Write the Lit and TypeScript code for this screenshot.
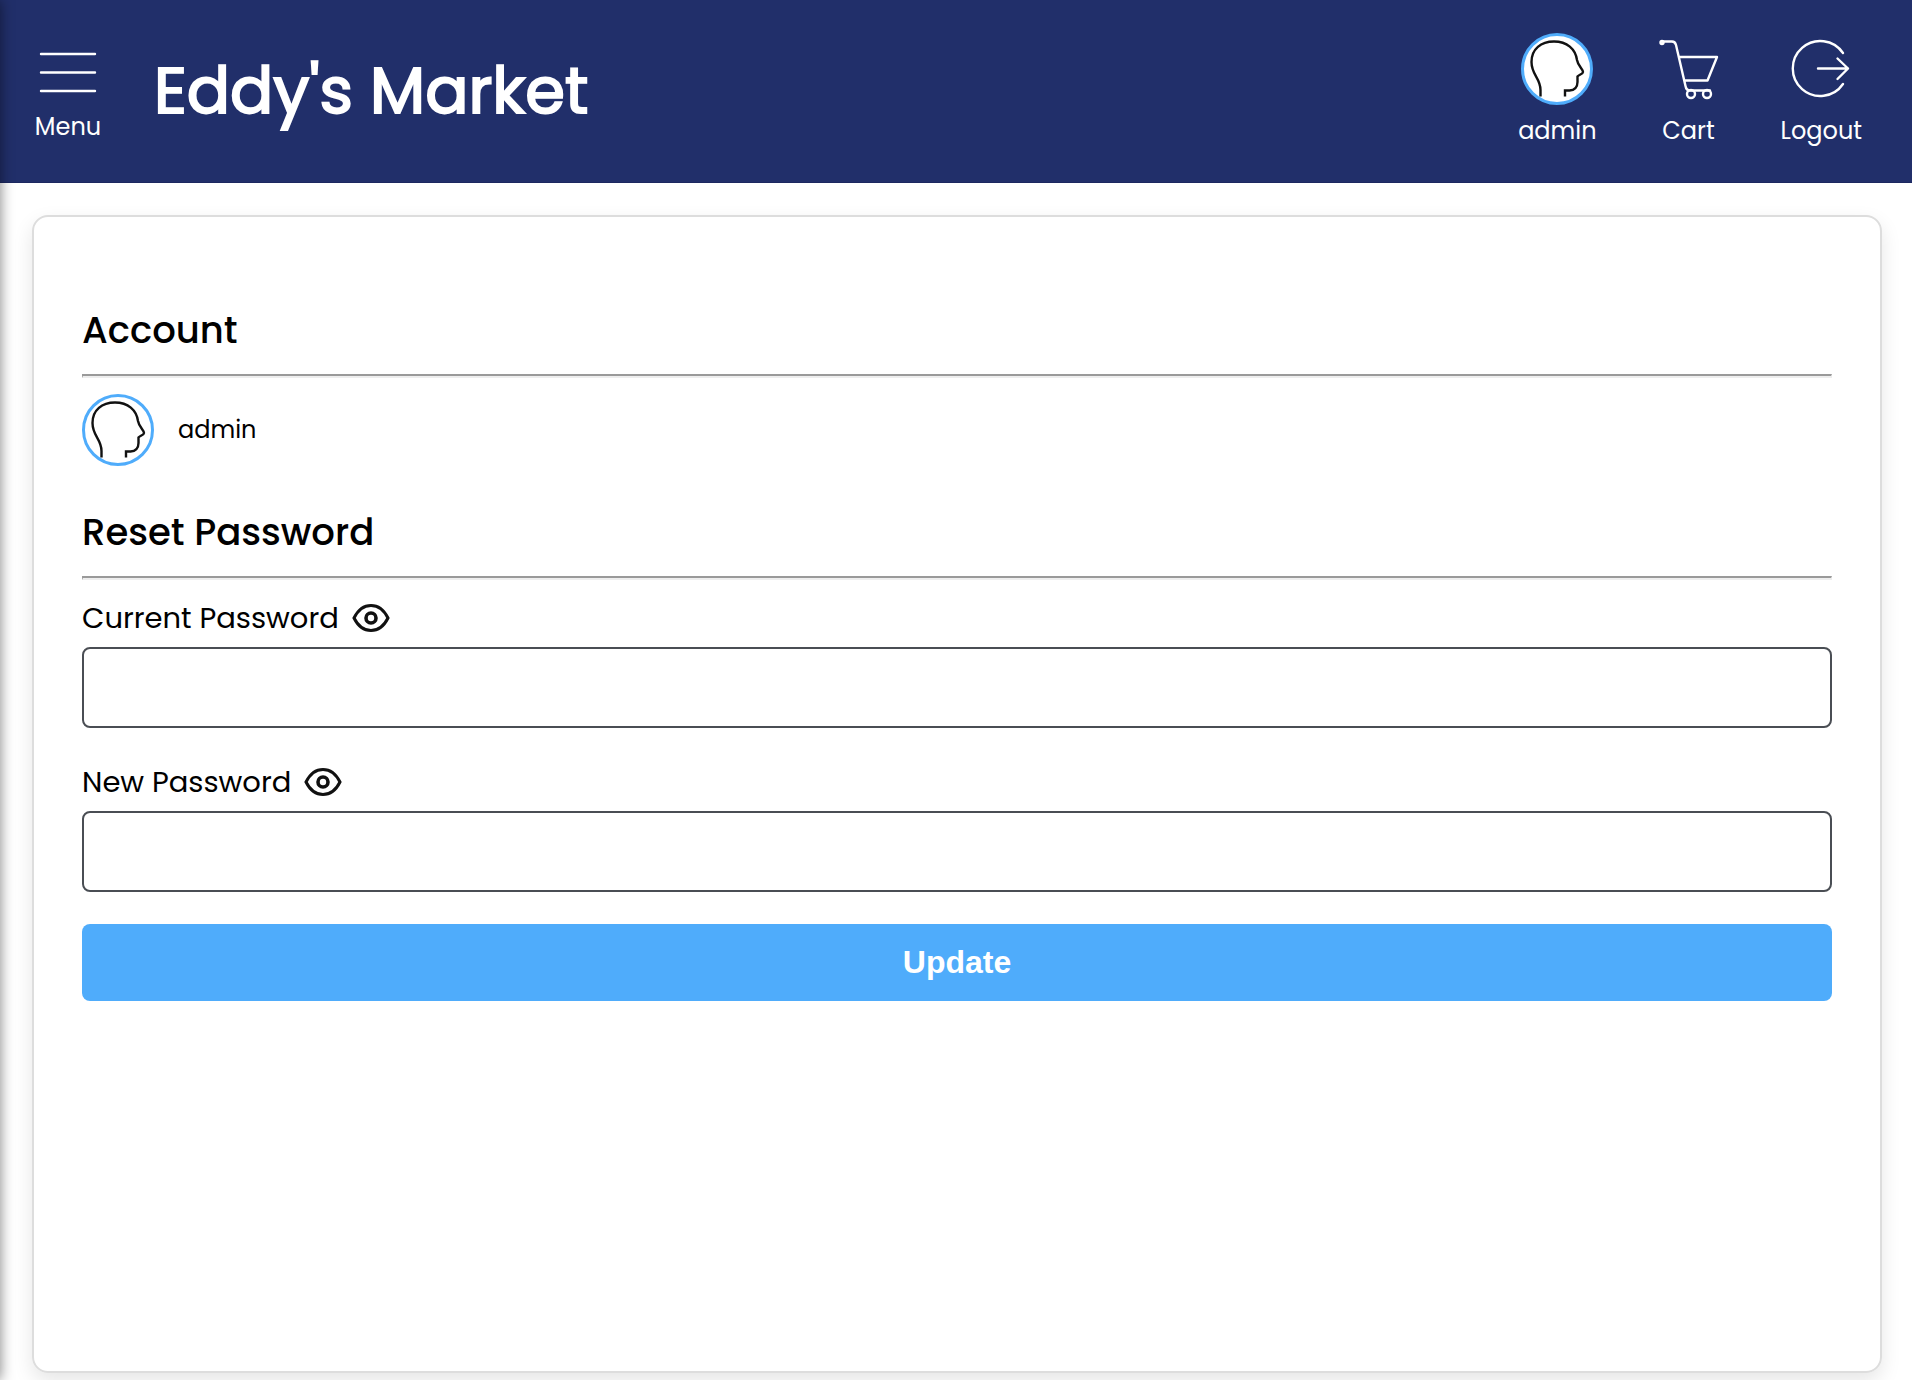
import { LitElement, html, css, svg } from "lit";
import { customElement, property, state } from "lit/decorators.js";

const head = svg`<path d="M19.500 63.500V57C19.500 45 10.500 42 10.500 29C10.500 16 20 8.500 33 8.500C46 8.500 54.500 16 56 27C57 33 62 36 62 39C62 41 57.500 42 56.500 43.500V49C56.500 54 53.500 57.500 48.500 57.500H44V63.500" />`;

@customElement("user-avatar")
class UserAvatar extends LitElement {
  static styles = css`
    :host {
      display: block;
      box-sizing: border-box;
      width: 72px;
      height: 72px;
      border: 3px solid #4facfb;
      border-radius: 50%;
      background: #fff;
    }
    .head {
      display: block;
      width: 100%;
      height: 100%;
      fill: none;
      stroke: #111;
      stroke-width: 2.400;
    }
  `;

  render() {
    return html`<svg class="head" viewBox="3 3 66 66" aria-hidden="true">${head}</svg>`;
  }
}

@customElement("password-field")
class PasswordField extends LitElement {
  @property() label = "";
  @state() private shown = false;

  static styles = css`
    :host {
      display: block;
    }
    .caption {
      display: flex;
      align-items: center;
      gap: 13px;
      height: 44px;
      margin-bottom: 7px;
      font-size: 29px;
    }
    .toggle {
      display: flex;
      padding: 0;
      border: 0;
      background: none;
      cursor: pointer;
    }
    .eye {
      width: 38px;
      height: 30px;
      fill: none;
      stroke: #111;
      stroke-width: 3;
    }
    .box {
      display: block;
      box-sizing: border-box;
      width: 100%;
      height: 81px;
      padding: 0 16px;
      border: 2px solid #4a4e54;
      border-radius: 8px;
      background: #fff;
      font: inherit;
      font-size: 29px;
    }
  `;

  render() {
    return html`
      <div class="caption">
        <label for="box">${this.label}</label>
        <button
          class="toggle"
          type="button"
          aria-label="Show password"
          aria-pressed=${this.shown}
          @click=${() => (this.shown = !this.shown)}
        >
          <svg class="eye" viewBox="0 0 38 30" aria-hidden="true">
            <path d="M2 15C6 7 12 2.500 19 2.500S32 7 36 15C32 23 26 27.500 19 27.500S6 23 2 15Z" />
            <circle cx="19" cy="15" r="5" stroke-width="3.600" />
          </svg>
        </button>
      </div>
      <input id="box" class="box" type=${this.shown ? "text" : "password"} />
    `;
  }
}

@customElement("app-root")
class AppRoot extends LitElement {
  static styles = css`
    :host {
      display: flex;
      flex-direction: column;
      position: relative;
      min-height: 100vh;
      background: #fff;
      color: #000;
      font-family: Poppins, Inter, "Open Sans", sans-serif;
      font-size: 24px;
      line-height: 36px;
    }
    .drawer-edge {
      position: absolute;
      inset: 0 auto 0 -20px;
      width: 20px;
      box-shadow: 0 0 14px rgba(0, 0, 0, 0.5);
    }
    .bar {
      display: flex;
      align-items: center;
      box-sizing: border-box;
      height: 183px;
      padding: 0 50px 0 32px;
      border-bottom: 1px solid #1c2860;
      background: #212f6a;
      color: #fff;
    }
    .action {
      display: flex;
      flex-direction: column;
      align-items: center;
      padding: 0;
      border: 0;
      background: none;
      color: inherit;
      font: inherit;
      text-decoration: none;
      cursor: pointer;
    }
    .menu {
      width: 72px;
      gap: 4px;
    }
    .icon {
      width: 72px;
      height: 72px;
      fill: none;
      stroke: #fff;
      stroke-width: 2.400;
      stroke-linecap: round;
      stroke-linejoin: round;
    }
    .menu .icon {
      height: 68px;
    }
    .title {
      flex: 1;
      margin: 0 0 0 50px;
      font-size: 64px;
      font-weight: 400;
      line-height: 96px;
      -webkit-text-stroke: 2px currentColor;
    }
    .actions {
      display: flex;
      gap: 53px;
    }
    .actions .action {
      gap: 8px;
      min-width: 78px;
    }
    .page {
      display: flex;
      flex: 1;
      padding: 32px 30px 7px 32px;
    }
    .card {
      flex: 1;
      padding: 85px 48px 48px;
      border: 2px solid #ddd;
      border-radius: 16px;
      box-shadow: 0 8px 20px rgba(0, 0, 0, 0.1);
    }
    .heading {
      margin: 0;
      font-size: 37px;
      font-weight: 500;
      line-height: 56px;
    }
    .rule {
      height: 0;
      margin: 16px 0;
      border: 2px solid;
      border-color: #9a9a9a #eee #eee #9a9a9a;
      border-width: 2px 1px;
    }
    .profile {
      display: flex;
      align-items: center;
      gap: 24px;
      margin-bottom: 38px;
    }
    .form {
      display: flex;
      flex-direction: column;
      gap: 32px;
    }
    .update {
      height: 77px;
      border: 0;
      border-radius: 8px;
      background: #4facfb;
      color: #fff;
      font: bold 32px "Liberation Sans", Arial, sans-serif;
      cursor: pointer;
    }
  `;

  render() {
    return html`
      <header class="bar">
        <button class="action menu" type="button">
          <svg class="icon" viewBox="0 0 72 68" aria-hidden="true">
            <path d="M9 17H63M9 35.500H63M9 54H63" />
          </svg>
          Menu
        </button>
        <h1 class="title">Eddy's Market</h1>
        <nav class="actions">
          <a class="action" href="#account"><user-avatar></user-avatar>admin</a>
          <a class="action" href="#cart">
            <svg class="icon" viewBox="0 0 72 72" aria-hidden="true">
              <circle cx="9" cy="9.500" r="1.500" />
              <path d="M9 8.500H19C21.500 8.500 22.500 10 23 12L32.500 53C33 56 34.500 57.500 37 57.500H57M26 24H64L54.500 47.500H31.500" />
              <circle cx="38" cy="61" r="4" />
              <circle cx="54" cy="61" r="4" />
            </svg>
            Cart
          </a>
          <a class="action" href="#logout">
            <svg class="icon" viewBox="0 0 72 72" aria-hidden="true">
              <path d="M58 20A27.500 27.500 0 1 0 58 51M33 35.500H63M52.500 25.500L63 35.500L52.500 46" />
            </svg>
            Logout
          </a>
        </nav>
      </header>
      <main class="page">
        <section class="card">
          <h2 class="heading">Account</h2>
          <hr class="rule" />
          <div class="profile"><user-avatar></user-avatar><span>admin</span></div>
          <h2 class="heading">Reset Password</h2>
          <hr class="rule" />
          <form class="form" @submit=${(e: Event) => e.preventDefault()}>
            <password-field label="Current Password"></password-field>
            <password-field label="New Password"></password-field>
            <button class="update" type="submit">Update</button>
          </form>
        </section>
      </main>
      <div class="drawer-edge"></div>
    `;
  }
}
